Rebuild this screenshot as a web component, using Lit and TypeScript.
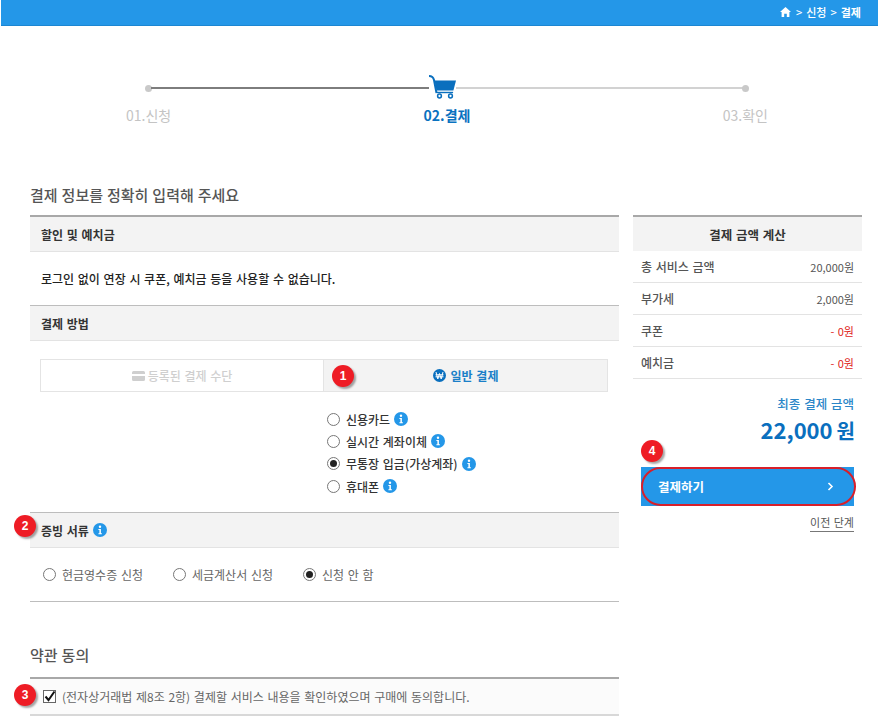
import { LitElement, html, css } from "lit";
import { customElement } from "lit/decorators.js";

const info = html`<svg class="info" viewBox="0 0 14 14" width="14" height="14"><circle cx="7" cy="7" r="7" fill="#2497e8"/><circle cx="7" cy="3.8" r="1.2" fill="#fff"/><path d="M5.4 6h2.5v4.2h1v1.1H5.4v-1.1h1V7.1h-1z" fill="#fff"/></svg>`;

const radio = (on: boolean) => html`<span class="radio ${on ? "on" : ""}"></span>`;

const badge = (n: number, cls: string) => html`<span class="badge ${cls}">${n}</span>`;

@customElement("app-root")
export class AppRoot extends LitElement {
  static styles = css`
    :host { display: block; width: 880px; height: 721px; overflow: hidden; background: #fff; font-family: "Noto Sans CJK KR", "Liberation Sans", sans-serif; font-size: 12px; word-spacing: 1px; color: #333; }
    * { box-sizing: border-box; }
    .top { height: 26px; margin: 0 2px 0 1px; background: #2497e8; border-bottom: 1px solid #1c86d2; color: #fff; display: flex; align-items: center; justify-content: flex-end; gap: 4px; padding: 0 17px 2px 0; font-size: 11px; line-height: 14px; font-weight: 500; }
    .top b { font-weight: 700; }
    .top svg { display: block; margin-right: 1px; }
    .stepper { height: 124px; padding: 34px 0 0 0; margin: 0 112px 0 126px; display: flex; flex-direction: column; }
    .track { display: flex; align-items: center; height: 56px; margin: 0 0 0 19px; position: relative; width: 604px; }
    .dot { width: 7px; height: 7px; border-radius: 50%; background: #c9c9c9; flex: none; }
    .line1 { height: 2px; width: 278px; background: #7d7d7d; margin-left: -1px; flex: none; }
    .line2 { height: 2px; flex: 1; background: #d2d2d2; margin-right: -1px; }
    .cart { flex: none; display: block; margin: -2px 0 0 -1px; }
    .labels { display: flex; justify-content: space-between; align-items: center; margin-top: -11px; font-size: 14px; line-height: 20px; color: #c4c4c4; word-spacing: 0; }
    .labels .cur { color: #0a72c0; font-weight: 700; }
    .columns { display: flex; gap: 14px; padding: 0 18px 0 30px; }
    .left { width: 589px; flex: none; }
    .right { width: 229px; flex: none; padding-top: 65px; position: relative; }
    h2 { margin: 0; font-size: 15px; line-height: 20px; font-weight: 500; color: #555; word-spacing: .6px; }
    .t1 { padding: 35px 0 10px; }
    .sec-head { position: relative; height: 37px; background: #f3f3f3; border-top: 2px solid #a8a8a8; border-bottom: 1px solid #e3e3e3; display: flex; align-items: center; gap: 4px; padding-left: 11px; font-weight: 700; color: #333; }
    .sec-head.thin { border-top-width: 1px; height: 36px; border-top-color: #bdbdbd; }
    .notice { height: 53px; display: flex; align-items: center; padding-left: 11px; font-weight: 500; color: #222; }
    .tabs { display: flex; margin: 18px 11px 0 10px; height: 33px; }
    .tab { flex: 1; display: flex; align-items: center; justify-content: center; gap: 3px; border: 1px solid #e4e4e4; font-weight: 500; position: relative; }
    .tab.off { color: #cfcfcf; border-right: none; width: 283px; flex: none; }
    .tab.on { background: #f3f3f3; color: #1a7fc8; font-weight: 700; gap: 5px; }
    .methods { display: flex; flex-direction: column; margin: 16px 0 0 297px; height: 104px; }
    .m { height: 22.3px; display: flex; align-items: center; gap: 4px; color: #333; font-weight: 500; }
    .m .radio { margin-right: 2px; }
    .radio { width: 13px; height: 13px; border-radius: 50%; border: 1px solid #777; background: #fff; flex: none; position: relative; display: block; }
    .radio.on::after { content: ""; position: absolute; inset: 2px; border-radius: 50%; background: #222; }
    .info { flex: none; display: block; }
    .receipt { height: 54px; display: flex; align-items: center; padding-left: 13px; color: #666; border-bottom: 1px solid #bdbdbd; font-weight: 400; }
    .receipt label { display: flex; align-items: center; gap: 6px; }
    .receipt label:nth-child(1) { width: 130px; }
    .receipt label:nth-child(2) { width: 130px; }
    .t2 { padding: 43px 0 12px; }
    .agree { position: relative; height: 39px; border-top: 2px solid #a8a8a8; border-bottom: 2px solid #d8d8d8; background: #fbfbfb; display: flex; align-items: center; gap: 6px; padding-left: 13px; color: #666; }
    .check { width: 13px; height: 13px; border: 1px solid #666; background: #fff; display: block; flex: none; position: relative; }
    .check svg { position: absolute; left: -1px; top: -2px; }
    .calc-head { height: 36px; background: #f3f3f3; border-top: 2px solid #a8a8a8; display: flex; align-items: center; justify-content: center; font-weight: 700; font-size: 12.5px; color: #333; }
    .row { height: 32px; display: flex; align-items: center; justify-content: space-between; padding: 0 8px; border-bottom: 1px solid #e3e3e3; color: #555; font-weight: 500; }
    .row span:last-child { font-weight: 400; font-size: 11px; }
    .row .red { color: #e0231b; }
    .final { text-align: right; padding: 17px 8px 0 0; color: #2a86c8; font-size: 12.5px; line-height: 16px; font-weight: 500; }
    .amount { padding: 1px 7px 0 0; color: #0a6fbe; font-size: 22px; line-height: 32px; font-weight: 700; display: flex; justify-content: flex-end; align-items: baseline; gap: 4px; word-spacing: 0; }
    .amount span:last-child { font-size: 20px; }
    .pay { position: relative; margin: 20px 8px 0; height: 39px; background: #2497e8; color: #fff; display: flex; align-items: center; justify-content: space-between; padding: 0 20px 0 17px; font-weight: 700; font-size: 12.5px; }
    .ring { position: absolute; left: 0; top: 0; width: 215px; height: 39px; border: 2px solid #d81f2a; border-radius: 20px; }
    .prev { display: flex; justify-content: flex-end; padding: 8px 8px 0 0; }
    .prev span { border-bottom: 1px solid #777; color: #555; font-size: 11px; line-height: 16px; padding-bottom: 1px; }
    .badge { position: absolute; width: 22px; height: 22px; border-radius: 50%; background: #ee1c25; color: #fff; font-family: "Liberation Sans", sans-serif; font-weight: 700; font-size: 12px; display: flex; align-items: center; justify-content: center; box-shadow: 2px 2px 2px rgba(0,0,0,.35); }
    .b1 { left: 8px; top: 5px; }
    .b2 { left: -16px; top: 2px; }
    .b3 { left: -16px; top: 5px; }
    .b4 { left: 0; top: -27px; }
  `;

  render() {
    return html`
      <div class="top">
        <svg width="11" height="10" viewBox="0 0 11 10"><path d="M5.500 0 0 5h1.600v5h2.600V6.800h2.600V10h2.600V5H11z" fill="#fff"/></svg>
        <span>&gt;</span><span>신청</span><span>&gt;</span><b>결제</b>
      </div>
      <div class="stepper">
        <div class="track">
          <span class="dot"></span><span class="line1"></span>
          <svg class="cart" width="28" height="24" viewBox="0 0 28 24">
            <path d="M1 1c3.400 0 4.400 1.400 5 4l2.500 13" fill="none" stroke="#0a6fbe" stroke-width="2"/>
            <path d="M6.500 5.500H28l-2.600 10H8.500z" fill="#0a6fbe"/>
            <path d="M8.600 17.500h16.500" stroke="#0a6fbe" stroke-width="1.400"/>
            <circle cx="11.500" cy="21" r="1.900" fill="none" stroke="#0a6fbe" stroke-width="1.500"/>
            <circle cx="22.500" cy="21" r="1.900" fill="none" stroke="#0a6fbe" stroke-width="1.500"/>
          </svg>
          <span class="line2"></span><span class="dot"></span>
        </div>
        <div class="labels"><span>01.신청</span><span class="cur">02.결제</span><span>03.확인</span></div>
      </div>
      <div class="columns">
        <div class="left">
          <h2 class="t1">결제 정보를 정확히 입력해 주세요</h2>
          <div class="sec-head">할인 및 예치금</div>
          <div class="notice">로그인 없이 연장 시 쿠폰, 예치금 등을 사용할 수 없습니다.</div>
          <div class="sec-head thin">결제 방법</div>
          <div class="tabs">
            <div class="tab off">
              <svg width="13" height="10" viewBox="0 0 13 10"><path d="M0 1.500A1.500 1.500 0 0 1 1.500 0h10A1.500 1.500 0 0 1 13 1.500V3H0zM0 5h13v3.500A1.500 1.500 0 0 1 11.500 10h-10A1.500 1.500 0 0 1 0 8.500z" fill="#cfcfcf"/></svg>
              등록된 결제 수단
            </div>
            <div class="tab on">
              ${badge(1, "b1")}
              <svg width="13" height="13" viewBox="0 0 13 13"><circle cx="6.500" cy="6.500" r="6.500" fill="#0a6fbe"/><path d="M3 3l1.800 7 1.700-5.500 1.700 5.500 1.800-7M2.500 5.800h8M2.500 7.800h8" fill="none" stroke="#fff" stroke-width="1"/></svg>
              일반 결제
            </div>
          </div>
          <div class="methods">
            <div class="m">${radio(false)}신용카드 ${info}</div>
            <div class="m">${radio(false)}실시간 계좌이체 ${info}</div>
            <div class="m">${radio(true)}무통장 입금(가상계좌) ${info}</div>
            <div class="m">${radio(false)}휴대폰 ${info}</div>
          </div>
          <div class="sec-head thin">${badge(2, "b2")}증빙 서류 ${info}</div>
          <div class="receipt">
            <label>${radio(false)}현금영수증 신청</label>
            <label>${radio(false)}세금계산서 신청</label>
            <label>${radio(true)}신청 안 함</label>
          </div>
          <h2 class="t2">약관 동의</h2>
          <div class="agree">
            ${badge(3, "b3")}
            <span class="check"><svg width="14" height="14" viewBox="0 0 14 14"><path d="M2.500 7.500 5.500 11 11.500 2.500" fill="none" stroke="#111" stroke-width="2"/></svg></span>
            (전자상거래법 제8조 2항) 결제할 서비스 내용을 확인하였으며 구매에 동의합니다.
          </div>
        </div>
        <div class="right">
          <div class="calc-head">결제 금액 계산</div>
          <div class="row"><span>총 서비스 금액</span><span>20,000원</span></div>
          <div class="row"><span>부가세</span><span>2,000원</span></div>
          <div class="row"><span>쿠폰</span><span class="red">- 0원</span></div>
          <div class="row"><span>예치금</span><span class="red">- 0원</span></div>
          <div class="final">최종 결제 금액</div>
          <div class="amount"><span>22,000</span><span>원</span></div>
          <div class="pay">
            ${badge(4, "b4")}
            <span>결제하기</span>
            <svg width="7" height="9" viewBox="0 0 7 9"><path d="M1.500 1 5 4.500 1.500 8" fill="none" stroke="#fff" stroke-width="1.600"/></svg>
            <span class="ring"></span>
          </div>
          <div class="prev"><span>이전 단계</span></div>
        </div>
      </div>
    `;
  }
}
